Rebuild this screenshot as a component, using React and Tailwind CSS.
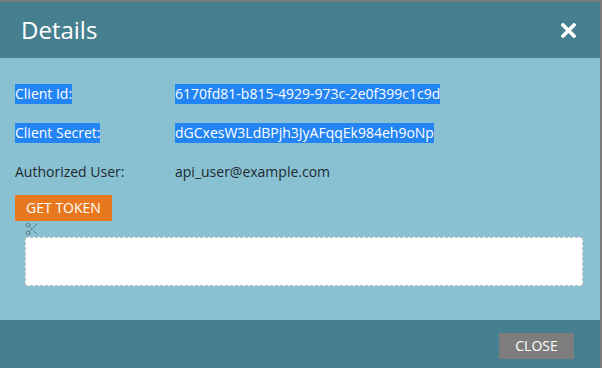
import { Scissors } from 'lucide-react';

const rows = [
  { label: 'Client Id:', value: '6170fd81-b815-4929-973c-2e0f399c1c9d', selected: true },
  { label: 'Client Secret:', value: 'dGCxesW3LdBPjh3JyAFqqEk984eh9oNp', selected: true },
  { label: 'Authorized User:', value: 'api_user@example.com', selected: false },
];

function Selectable({ selected, children }) {
  if (!selected) return <span className="inline-block h-[20px] leading-[20px] text-[#1d2a30]">{children}</span>;
  return <span className="inline-block h-[20px] bg-[#2384f4] leading-[20px] text-white">{children}</span>;
}

export default function App() {
  return (
    <div
      className="flex h-[368px] w-[602px] flex-col border-t-2 border-r-2 border-[#7b7b7b] bg-[#89c1d2]"
      style={{ fontFamily: '"Open Sans", "Liberation Sans", sans-serif' }}
    >
      <header className="flex h-[56px] shrink-0 items-center justify-between bg-[#467f8f] pl-[21px] pr-[24px]">
        <h1 className="text-[24px] leading-none text-white">Details</h1>
        <button className="text-white" aria-label="Close">
          <svg width="15" height="15" viewBox="0 0 15 15">
            <path d="M2 2 L13 13 M13 2 L2 13" stroke="currentColor" strokeWidth="3.6" strokeLinecap="square" />
          </svg>
        </button>
      </header>

      <section className="flex flex-1 flex-col px-[15px] pt-[25px]">
        <div className="flex flex-col gap-[18px]">
          {rows.map((row) => (
            <div key={row.label} className="grid grid-cols-[160px_1fr] text-[14px]">
              <div>
                <Selectable selected={row.selected}>{row.label}</Selectable>
              </div>
              <div>
                <Selectable selected={row.selected}>{row.value}</Selectable>
              </div>
            </div>
          ))}
        </div>

        <button className="mt-[13px] h-[26px] w-[97px] bg-[#e8781d] text-[14px] leading-[26px] text-white">
          GET TOKEN
        </button>

        <div className="ml-[9px] flex h-[16px] items-center">
          <Scissors size={16} strokeWidth={1.5} className="text-[#62808e]" />
        </div>

        <div className="ml-[10px] mr-[2px] h-[49px] border border-dashed border-[#bdbdbd] bg-white" />
      </section>

      <footer className="flex h-[48px] shrink-0 items-start justify-end bg-[#467f8f] pr-[26px] pt-[13px]">
        <button className="h-[26px] w-[75px] bg-[#7d7d7d] text-[14px] leading-[26px] text-white">CLOSE</button>
      </footer>
    </div>
  );
}
